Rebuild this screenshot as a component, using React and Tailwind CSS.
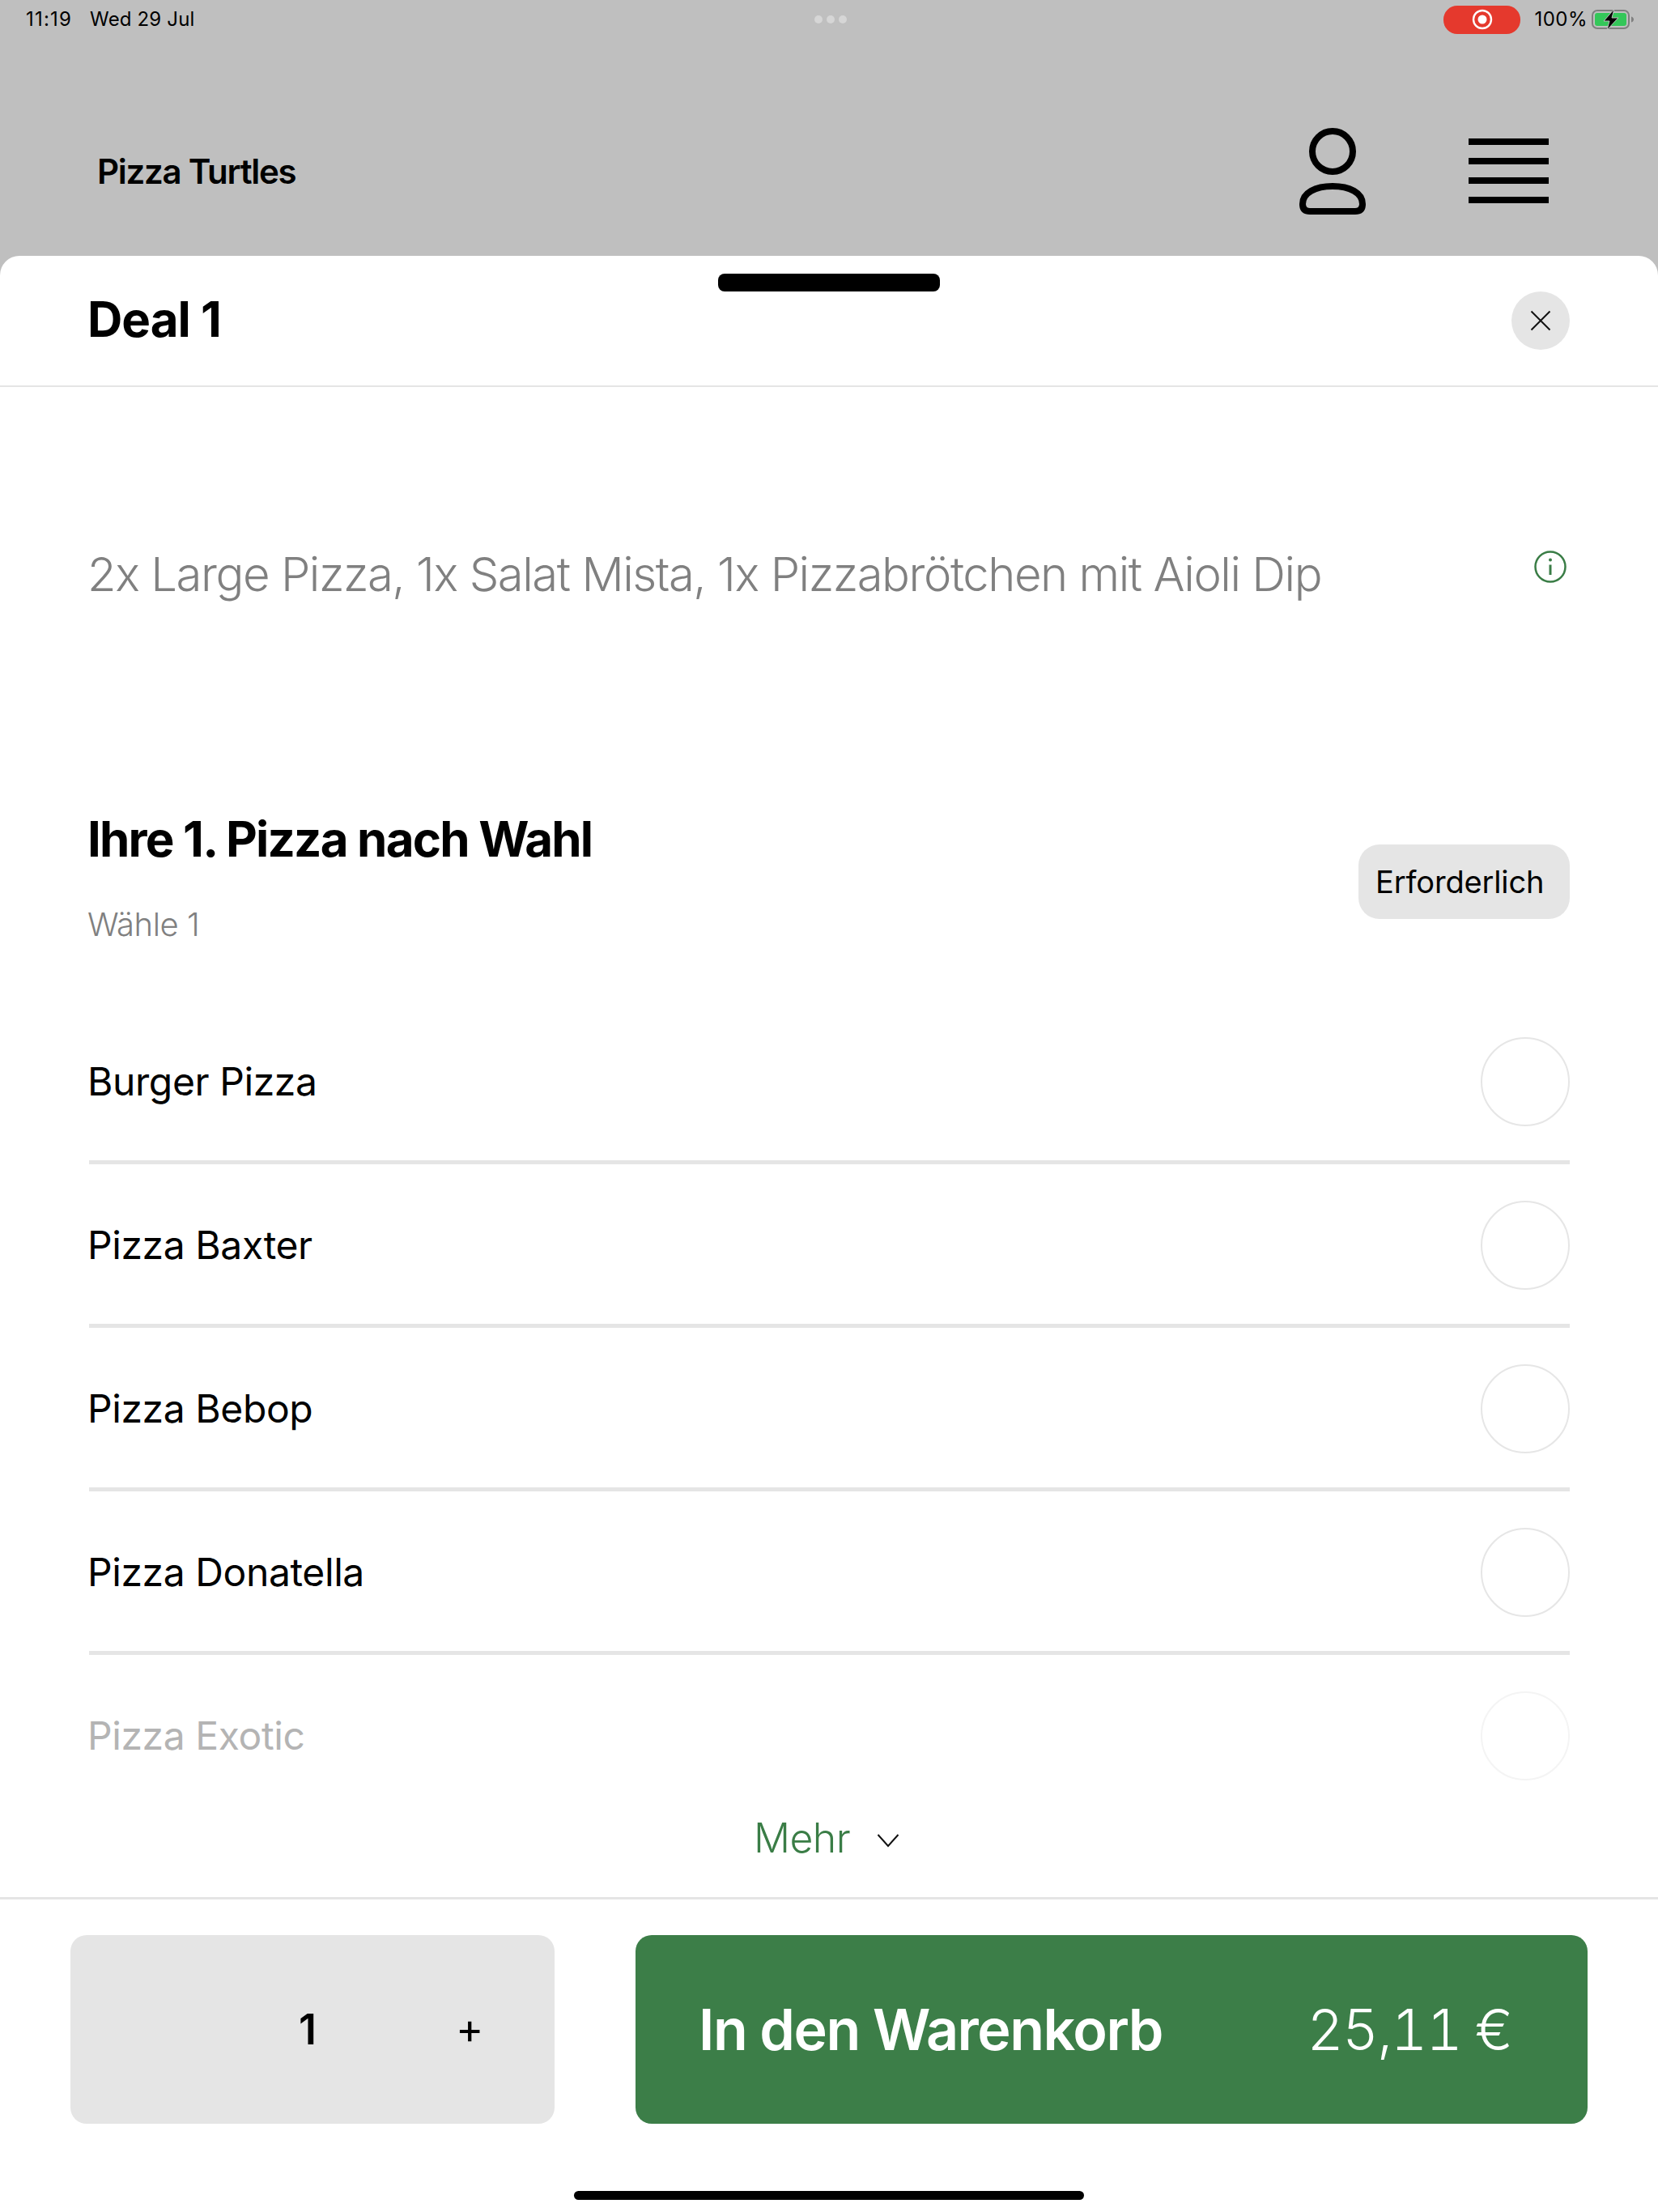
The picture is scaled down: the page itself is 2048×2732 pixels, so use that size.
const FONT = "font-['Inter','Liberation_Sans',sans-serif]";

function Battery() {
  return (
    <svg width="54" height="28" viewBox="0 0 54 28" className="ml-[5px]">
      <rect x="1" y="3" width="45" height="22" rx="6" fill="none" stroke="#7f7f7f" strokeWidth="2" />
      <rect x="4" y="6" width="39" height="16" rx="3" fill="#34c759" />
      <path d="M49 10.5c2 .5 3 2 3 3.5s-1 3-3 3.5z" fill="#7f7f7f" />
      <path d="M28 1 L15 16 H22 L19 27 L33 12 H25 Z" fill="#000" stroke="#bfbfbf" strokeWidth="1" />
    </svg>
  );
}

function StatusBar() {
  return (
    <div className="h-[48px] grid grid-cols-3 items-center pl-[32px] pr-[28px] text-[24px] leading-[28px] text-black">
      <div className="flex gap-[22px] whitespace-nowrap">
        <span className="tracking-[1.2px]">11:19</span>
        <span className="tracking-[0.15px]">Wed 29 Jul</span>
      </div>
      <div className="flex justify-center gap-[5px]">
        <span className="w-[10px] h-[10px] rounded-full bg-[#d6d6d6]" />
        <span className="w-[10px] h-[10px] rounded-full bg-[#d6d6d6]" />
        <span className="w-[10px] h-[10px] rounded-full bg-[#d6d6d6]" />
      </div>
      <div className="flex justify-end items-center">
        <div className="w-[95px] h-[35px] rounded-[17px] bg-[#e5392d] flex items-center justify-center mr-[17px]">
          <svg width="26" height="26" viewBox="0 0 26 26">
            <circle cx="13" cy="13" r="11" fill="none" stroke="#fff" strokeWidth="2.4" />
            <circle cx="13" cy="13" r="5.5" fill="#fff" />
          </svg>
        </div>
        <span className="whitespace-nowrap tracking-[0.5px]">100%</span>
        <Battery />
      </div>
    </div>
  );
}

function Nav() {
  return (
    <div className="h-[268px] flex items-start pl-[120px] pr-[135px] pt-[139px]">
      <span className="text-[42px] leading-[50px] font-semibold text-black tracking-[-1.27px]">Pizza Turtles</span>
      <div className="ml-auto flex items-start gap-[126px] -mt-[29px]">
        <svg width="84" height="107" viewBox="0 0 84 107" fill="none" stroke="#000" strokeWidth="8">
          <ellipse cx="42" cy="29" rx="25" ry="25" />
          <path d="M42 72c-21 0-37 8-37 22 0 6 3 9 9 9h56c6 0 9-3 9-9 0-14-16-22-37-22z" />
        </svg>
        <div className="w-[99px] mt-[13px] flex flex-col gap-[16px]">
          <span className="h-[8px] bg-black" />
          <span className="h-[8px] bg-black" />
          <span className="h-[8px] bg-black" />
          <span className="h-[8px] bg-black" />
        </div>
      </div>
    </div>
  );
}

function SheetHeader() {
  return (
    <div className="h-[162px] relative border-b-2 border-[#e5e5e5] flex items-start pl-[108px] pr-[109px] pt-[42px]">
      <div className="absolute top-[22px] left-[887px] w-[274px] h-[22px] rounded-[8px] bg-black" />
      <h1 className="text-[60px] leading-[72px] font-bold text-black tracking-[-1px]">Deal 1</h1>
      <button className="ml-auto mt-[2px] w-[72px] h-[72px] rounded-full bg-[#e5e5e5] flex items-center justify-center">
        <svg width="26" height="26" viewBox="0 0 26 26" stroke="#111" strokeWidth="2" fill="none">
          <path d="M1.5 1.5 24.500 24.500M24.500 1.500 1.500 24.500" />
        </svg>
      </button>
    </div>
  );
}

function Description() {
  return (
    <div className="h-[135px] mt-[196px] pl-[108px] pr-[113px] flex items-start">
      <p className="text-[58px] leading-[70px] font-[350] text-[#808080] whitespace-nowrap tracking-[-1.46px]">
        2x Large Pizza, 1x Salat Mista, 1x Pizzabrötchen mit Aioli Dip
      </p>
      <svg className="ml-auto mt-[6px]" width="40" height="40" viewBox="0 0 40 40" fill="none" stroke="#3a7d46">
        <circle cx="20" cy="20" r="18.500" strokeWidth="2.500" />
        <path d="M20 17.500V30" strokeWidth="3" />
        <circle cx="20" cy="11.500" r="2" fill="#3a7d46" stroke="none" />
      </svg>
    </div>
  );
}

function GroupHeader() {
  return (
    <div className="mt-[190px] pl-[108px] pr-[109px] flex items-start">
      <div>
        <h2 className="text-[60px] leading-[74px] font-bold text-black tracking-[-1.8px]">
          Ihre 1. Pizza nach Wahl
        </h2>
        <p className="mt-[44px] text-[40px] leading-[50px] font-[350] text-[#808080] tracking-[-0.5px]">Wähle 1</p>
      </div>
      <span className="ml-auto mt-[44px] h-[92px] w-[261px] rounded-[26px] bg-[#e5e5e5] pl-[21px] flex items-center text-[38px] text-black font-normal tracking-[-0.15px]">
        Erforderlich
      </span>
    </div>
  );
}

const ITEMS = ["Burger Pizza", "Pizza Baxter", "Pizza Bebop", "Pizza Donatella"];

function Row({ label, faded, last }) {
  return (
    <div className={`h-[202px] pt-[2px] flex items-center justify-between border-b-[5px] ${last ? "border-transparent" : "border-[#e5e5e5]"}`}>
      <span className={`-ml-[2px] text-[48px] tracking-[-0.4px] font-normal ${faded ? "text-[#b4b4b4]" : "text-black"}`}>{label}</span>
      <span className={`w-[110px] h-[110px] rounded-full border-2 ${faded ? "border-[#f4f4f4]" : "border-[#e6e6e6]"}`} />
    </div>
  );
}

function Options() {
  return (
    <div className="mt-[69px] ml-[110px] mr-[109px]">
      {ITEMS.map((t) => (
        <Row key={t} label={t} />
      ))}
      <Row label="Pizza Exotic" faded last />
    </div>
  );
}

function More() {
  return (
    <div className="h-[145px] mt-[-48px] pr-[6px] flex items-center justify-center text-[#3a7d46]">
      <span className="text-[50px] font-[350] tracking-[-0.6px]">Mehr</span>
      <svg className="ml-[33px] mt-[4px]" width="28" height="18" viewBox="0 0 28 18" fill="none" stroke="#111" strokeWidth="2">
        <path d="M1.5 2 14 16 26.500 2" />
      </svg>
    </div>
  );
}

function Footer() {
  return (
    <div className="flex-1 border-t-[3px] border-[#e5e5e5] relative">
      <div className="flex pl-[87px] pr-[87px] pt-[44px] gap-[100px]">
        <div className="w-[598px] h-[233px] rounded-[20px] bg-[#e5e5e5] flex items-center">
          <span className="ml-[282px] text-[52px] font-semibold text-black">1</span>
          <span className="ml-[172px] -mt-[2px] text-[52px] text-black font-normal">+</span>
        </div>
        <div className="flex-1 h-[233px] rounded-[20px] bg-[#3c7e48] flex items-center justify-between pl-[78px] pr-[94px] text-white text-[70px]">
          <span className="font-semibold tracking-[-1.5px]">In den Warenkorb</span>
          <span className="font-light tabular-nums tracking-[-1.9px]">25,11 €</span>
        </div>
      </div>
      <div className="absolute left-[709px] bottom-[15px] w-[630px] h-[11px] rounded-full bg-black" />
    </div>
  );
}

export default function App() {
  return (
    <div className={`${FONT} w-[2048px] h-[2732px] bg-[#bfbfbf] flex flex-col overflow-hidden`}>
      <StatusBar />
      <Nav />
      <div className="flex-1 bg-white rounded-t-[24px] flex flex-col">
        <SheetHeader />
        <Description />
        <GroupHeader />
        <Options />
        <More />
        <Footer />
      </div>
    </div>
  );
}
